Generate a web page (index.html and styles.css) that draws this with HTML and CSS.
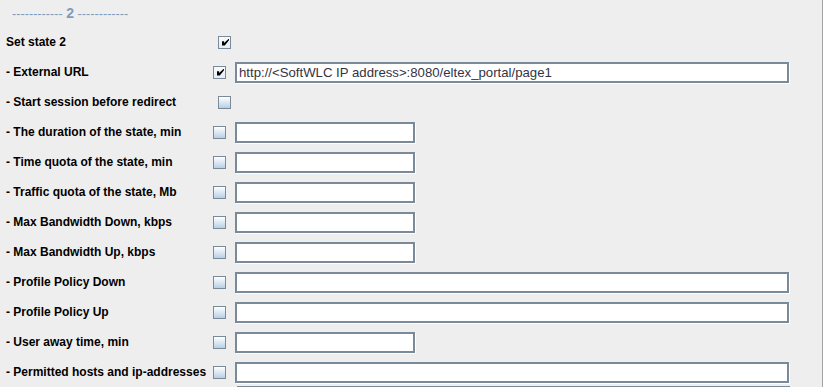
FILE: index.html
```html
<!DOCTYPE html>
<html lang="en">
<head>
    <meta charset="UTF-8">
    <title>Portal state 2</title>
    <link rel="stylesheet" href="styles.css">
</head>
<body>
    <div class="panel">
        <div class="separator">------------ <b>2</b> ------------</div>

        <div class="row">
            <span class="label">Set state 2</span>
            <span class="check checked solo"></span>
        </div>
        <div class="row">
            <span class="label">- External URL</span>
            <span class="check checked"></span>
            <input class="field wide" type="text" value="http://<SoftWLC IP address>:8080/eltex_portal/page1">
        </div>
        <div class="row">
            <span class="label">- Start session before redirect</span>
            <span class="check solo"></span>
        </div>
        <div class="row">
            <span class="label">- The duration of the state, min</span>
            <span class="check"></span>
            <input class="field" type="text">
        </div>
        <div class="row">
            <span class="label">- Time quota of the state, min</span>
            <span class="check"></span>
            <input class="field" type="text">
        </div>
        <div class="row">
            <span class="label">- Traffic quota of the state, Mb</span>
            <span class="check"></span>
            <input class="field" type="text">
        </div>
        <div class="row">
            <span class="label">- Max Bandwidth Down, kbps</span>
            <span class="check"></span>
            <input class="field" type="text">
        </div>
        <div class="row">
            <span class="label">- Max Bandwidth Up, kbps</span>
            <span class="check"></span>
            <input class="field" type="text">
        </div>
        <div class="row">
            <span class="label">- Profile Policy Down</span>
            <span class="check"></span>
            <input class="field wide" type="text">
        </div>
        <div class="row">
            <span class="label">- Profile Policy Up</span>
            <span class="check"></span>
            <input class="field wide" type="text">
        </div>
        <div class="row">
            <span class="label">- User away time, min</span>
            <span class="check"></span>
            <input class="field" type="text">
        </div>
        <div class="row">
            <span class="label">- Permitted hosts and ip-addresses</span>
            <span class="check"></span>
            <input class="field wide" type="text">
        </div>
        <div class="hosts-list"></div>
    </div>
</body>
</html>
```

FILE: styles.css
```css
body {
    margin: 0;
    background-color: #eeeeee;
    font-family: 'Liberation Sans', Arial, sans-serif;
    font-size: 12px;
    color: #000;
    overflow: hidden;
}
.panel {
    width: 822px;
    height: 387px;
    border-right: 1px solid #a3a3a3;
    overflow: hidden;
}
.separator {
    height: 27px;
    line-height: 26px;
    padding-left: 12px;
    font-size: 12.7px;
    color: #7f9cbc;
    white-space: pre;
}
.separator b {
    font-size: 14px;
}
.row {
    display: flex;
    align-items: center;
    height: 30px;
}
.label {
    width: 207px;
    padding-left: 6px;
    font-weight: bold;
    white-space: nowrap;
}
.check {
    width: 13px;
    height: 13px;
    box-sizing: border-box;
    border: 1px solid #7a8a99;
    background: linear-gradient(#ffffff, #b8cfe5);
    flex-shrink: 0;
    position: relative;
}
.check.solo {
    margin-left: 5px;
}
.check.checked {
    background: linear-gradient(#fafbfd, #e3ebf4);
}
/* tick of the Metal look */
.check.checked::after {
    content: "";
    position: absolute;
    left: 3px;
    top: 2px;
    width: 7px;
    height: 7px;
    background: #000;
    clip-path: polygon(0 40%, 30% 40%, 30% 65%, 100% 0, 100% 25%, 40% 100%, 0 100%);
}
.field {
    margin-left: 9px;
    width: 180px;
    height: 21px;
    box-sizing: border-box;
    border: 2px solid #7a8a99;
    box-shadow: 1px 1px 0 #ffffff;
    background-color: #fff;
    padding: 0 2px;
    font-family: 'Liberation Sans', Arial, sans-serif;
    font-size: 13.2px;
    color: #333344;
    outline: none;
}
.field.wide {
    width: 554px;
}
.hosts-list {
    margin-left: 237px;
    margin-top: -1px;
    width: 553px;
    height: 40px;
    border-top: 2px solid #7a8a99;
    background-color: #fff;
}
```
